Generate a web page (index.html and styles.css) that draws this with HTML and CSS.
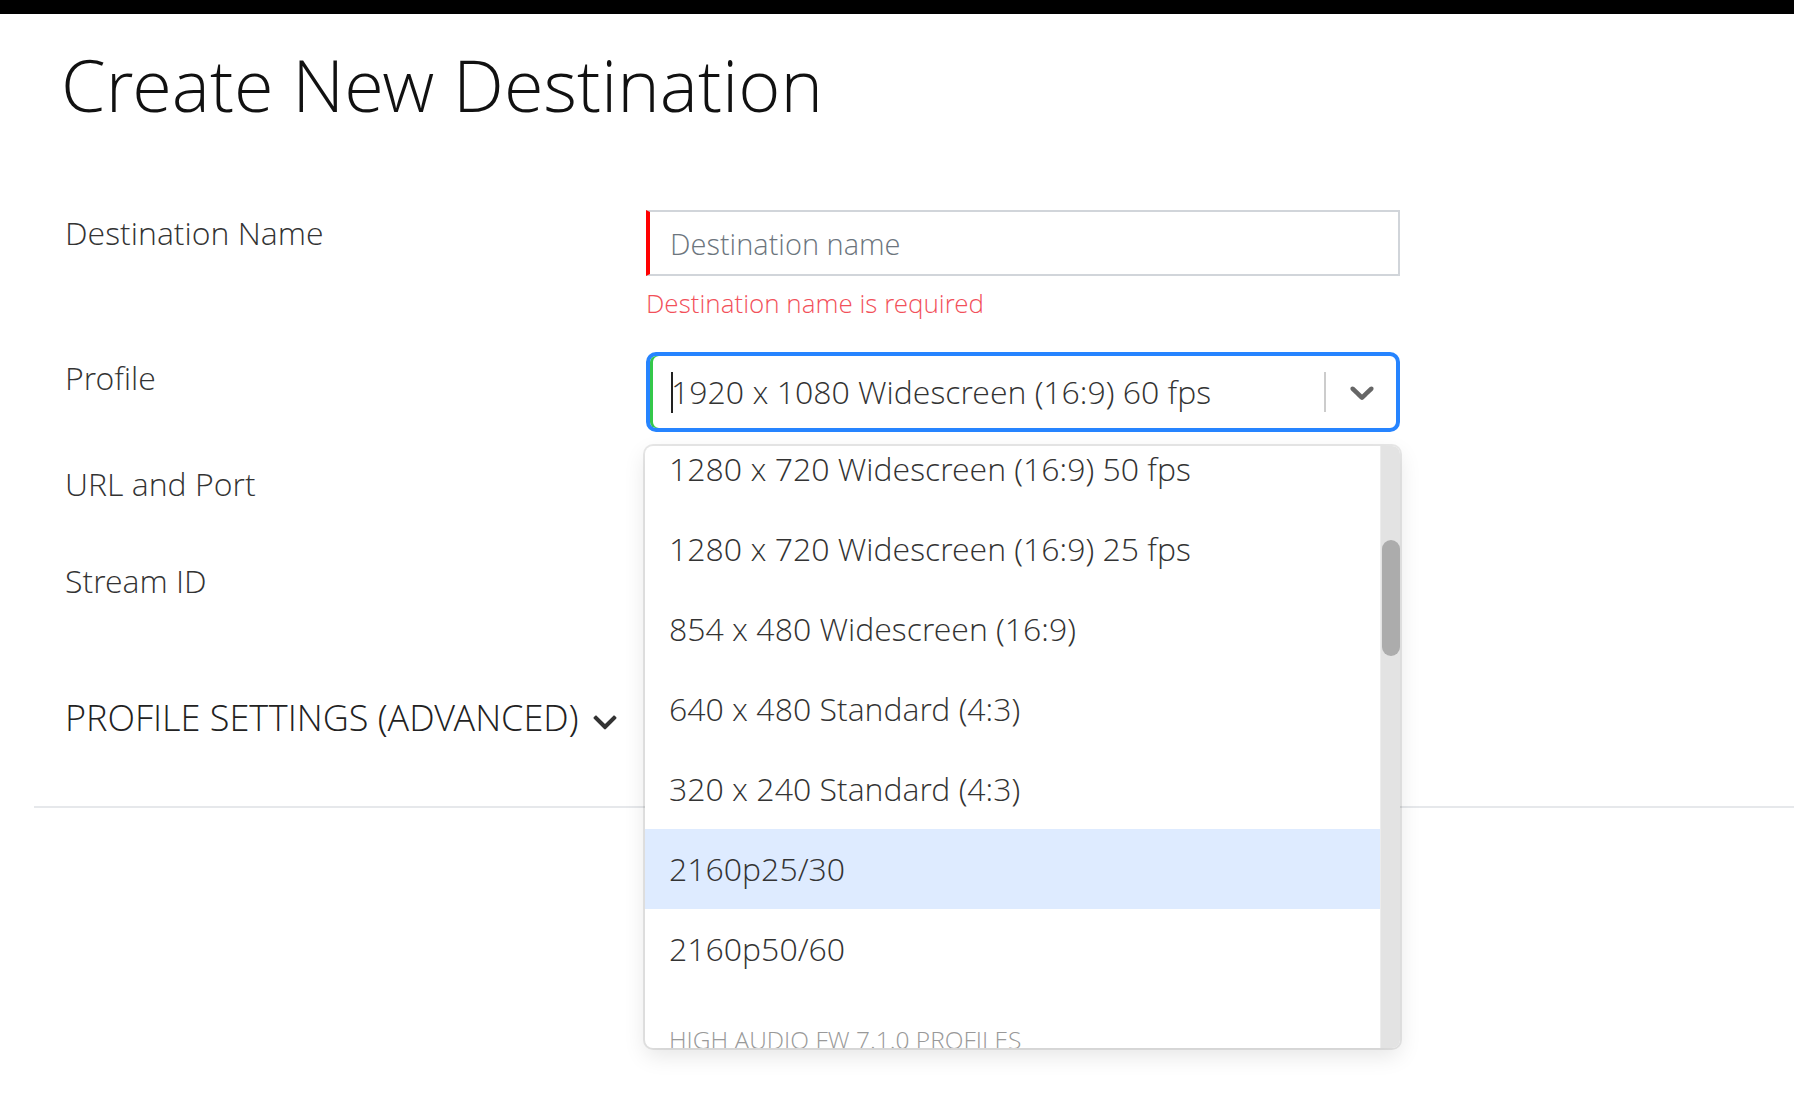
FILE: index.html
```html
<!DOCTYPE html>
<html lang="en">
<head>
<meta charset="utf-8">
<title>Create New Destination</title>
<link rel="stylesheet" href="styles.css">
</head>
<body>
<div class="topbar"></div>
<main class="page">
  <h1 class="title">Create New Destination</h1>
  <form class="form">
    <div class="row">
      <label class="label">Destination Name</label>
      <div class="control">
        <input class="text-input invalid" type="text" placeholder="Destination name">
        <div class="error">Destination name is required</div>
      </div>
    </div>
    <div class="row row-profile">
      <label class="label">Profile</label>
      <div class="control select-wrap">
        <div class="select">
          <div class="value"><span class="caret"></span>1920 x 1080 Widescreen (16:9) 60 fps</div>
          <span class="sep"></span>
          <span class="indicator">
            <svg viewBox="0 0 20 20" width="40" height="40"><path fill="#666" d="M4.516 7.548c0.436-0.446 1.043-0.481 1.576 0l3.908 3.747 3.908-3.747c0.533-0.481 1.141-0.446 1.574 0 0.436 0.445 0.408 1.197 0 1.615-0.406 0.418-4.695 4.502-4.695 4.502-0.217 0.223-0.502 0.335-0.787 0.335s-0.57-0.112-0.789-0.335c0 0-4.287-4.084-4.695-4.502s-0.436-1.170 0-1.615z"/></svg>
          </span>
        </div>
        <div class="menu">
          <div class="menu-list">
            <div class="menu-inner">
              <div class="option">1280 x 720 Widescreen (16:9) 50 fps</div>
              <div class="option">1280 x 720 Widescreen (16:9) 25 fps</div>
              <div class="option">854 x 480 Widescreen (16:9)</div>
              <div class="option">640 x 480 Standard (4:3)</div>
              <div class="option">320 x 240 Standard (4:3)</div>
              <div class="option focused">2160p25/30</div>
              <div class="option">2160p50/60</div>
              <div class="group">
                <div class="group-heading">High Audio FW 7.1.0 Profiles</div>
              </div>
            </div>
          </div>
          <div class="scrollbar"><div class="thumb"></div></div>
        </div>
      </div>
    </div>
    <div class="row">
      <label class="label">URL and Port</label>
      <div class="control"><input class="text-input" type="text"></div>
    </div>
    <div class="row">
      <label class="label">Stream ID</label>
      <div class="control"><input class="text-input" type="text"></div>
    </div>
  </form>
  <div class="advanced">
    <span>PROFILE SETTINGS (ADVANCED)</span>
    <svg class="adv-chevron" viewBox="0 0 448 512" width="24" height="27"><path fill="#333" d="M207.029 381.476L12.686 187.132c-9.373-9.373-9.373-24.569 0-33.941l22.667-22.667c9.357-9.357 24.522-9.375 33.901-.04L224 284.505l154.745-154.021c9.379-9.335 24.544-9.317 33.901.04l22.667 22.667c9.373 9.373 9.373 24.569 0 33.941L240.971 381.476c-9.373 9.372-24.569 9.372-33.942 0z"/></svg>
  </div>
</main>
<div class="divider"></div>
</body>
</html>
```

FILE: styles.css
```css
* { box-sizing: border-box; }

html, body {
  margin: 0;
  padding: 0;
  background: #fff;
}

body {
  min-height: 100vh;
  font-family: "Open Sans Light", "Open Sans", "Noto Sans", sans-serif;
  font-weight: 300;
  color: #333;
}

.topbar {
  height: 14px;
  background: #000;
}

.page {
  padding-left: 61px;
}

.title {
  margin: 27px 0 0;
  font-size: 72px;
  line-height: 86px;
  font-weight: 300;
  color: #111;
}

.form {
  margin-top: 83px;
  display: flex;
  flex-direction: column;
  gap: 31px;
}

.row {
  display: grid;
  grid-template-columns: 585px 754px;
}

.label {
  font-size: 32px;
  line-height: 44px;
  padding: 1px 0 0 4px;
  color: #333;
}

.row-profile {
  margin-bottom: -2px;
}

.row-profile .label {
  padding-top: 4px;
}

.control {
  display: flex;
  flex-direction: column;
}

.text-input {
  height: 66px;
  width: 100%;
  border: 2px solid #d1d5da;
  border-radius: 0;
  padding: 0 20px;
  font-family: inherit;
  font-weight: 300;
  font-size: 29px;
  color: #333;
  background: #fff;
  outline: none;
}

.text-input.invalid {
  border-left: 4px solid #ff0000;
}

.text-input::placeholder {
  color: #6c757d;
  opacity: 1;
}

.error {
  margin-top: 9px;
  font-size: 26px;
  line-height: 36px;
  color: #f2505a;
}

.select-wrap {
  position: relative;
}

.select {
  height: 80px;
  border: 4px solid #2684ff;
  border-radius: 10px;
  box-shadow: inset 3px 0 0 #34c84a;
  display: flex;
  align-items: center;
  background: #fff;
}

.value {
  flex: 1;
  padding-left: 21px;
  font-size: 32px;
  line-height: 44px;
  color: #333;
  white-space: nowrap;
  display: flex;
  align-items: center;
}

.caret {
  display: inline-block;
  width: 2px;
  height: 41px;
  background: #222;
  margin-right: -2px;
}

.sep {
  width: 2px;
  height: 40px;
  background: #ccc;
}

.indicator {
  display: flex;
  align-items: center;
  padding: 0 14px 0 16px;
}

.menu {
  position: absolute;
  top: calc(100% + 14px);
  left: -1px;
  width: 755px;
  height: 602px;
  background: #fff;
  border-radius: 8px;
  box-shadow: 0 0 0 2px rgba(0, 0, 0, 0.09), 0 8px 22px rgba(0, 0, 0, 0.1);
  display: flex;
  overflow: hidden;
  z-index: 5;
}

.menu-list {
  flex: 1;
  overflow: hidden;
}

.menu-inner {
  margin-top: -17px;
}

.option {
  height: 80px;
  padding: 0 24px;
  font-size: 32px;
  line-height: 80px;
  color: #333;
  white-space: nowrap;
}

.option.focused {
  background: #deebff;
}

.group {
  padding-top: 33px;
}

.group-heading {
  padding: 0 24px;
  font-size: 24.5px;
  line-height: 36px;
  color: #999;
  text-transform: uppercase;
  white-space: nowrap;
}

.scrollbar {
  width: 20px;
  background: #e3e3e3;
  border-left: 1px solid #ececec;
  padding-top: 94px;
  display: flex;
  justify-content: center;
}

.thumb {
  width: 18px;
  height: 116px;
  border-radius: 9px;
  background: #acacac;
}

.advanced {
  margin-top: 72px;
  padding-left: 4px;
  display: flex;
  align-items: center;
  gap: 14px;
  font-size: 36px;
  line-height: 44px;
  color: #222;
}

.adv-chevron {
  margin-top: 8px;
}

.divider {
  margin: 66px 0 0 34px;
  height: 2px;
  background: #e6e8eb;
}
```
